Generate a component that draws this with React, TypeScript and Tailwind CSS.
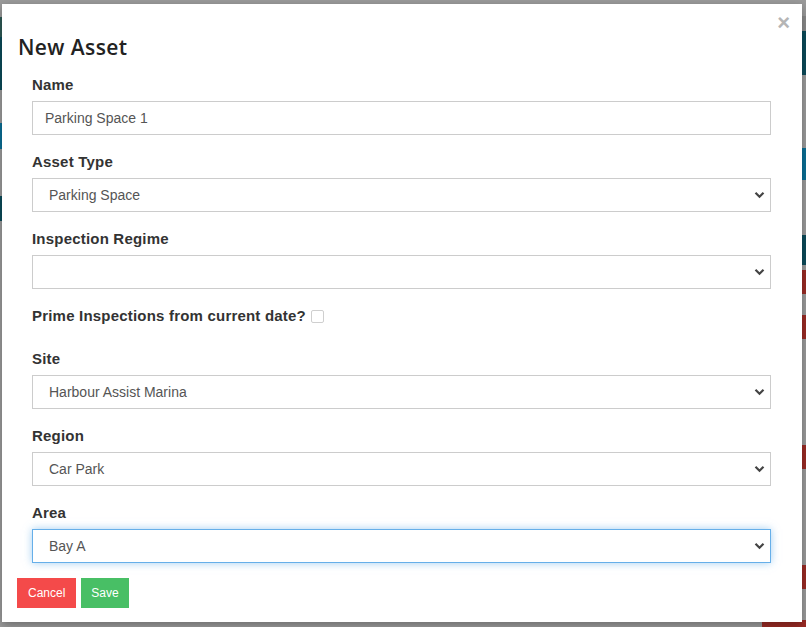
const Chevron = () => (
  <svg width="11" height="8" viewBox="0 0 11 8" className="shrink-0">
    <path d="M1.5 1.8 L5.5 5.8 L9.5 1.8" fill="none" stroke="#444" strokeWidth="2.2" />
  </svg>
);

const Label = ({ children }: { children: React.ReactNode }) => (
  <label className="block h-5 leading-5 text-[15px] tracking-[0.2px] font-bold text-[#333]">{children}</label>
);

const SelectBox = ({ value, focused }: { value: string; focused?: boolean }) => (
  <div
    className={
      focused
        ? "h-[34px] border border-[#66afe9] shadow-[0_0_8px_rgba(102,175,233,0.6)] bg-white pl-4 pr-[5px] flex items-center justify-between text-sm text-[#555]"
        : "h-[34px] border border-[#ccc] bg-white pl-4 pr-[5px] flex items-center justify-between text-sm text-[#555]"
    }
  >
    <span>{value}</span>
    <Chevron />
  </div>
);

const Group = ({ label, children }: { label: string; children: React.ReactNode }) => (
  <div className="mb-[17px]">
    <Label>{label}</Label>
    <div className="mt-[6px]">{children}</div>
  </div>
);

export default function App() {
  return (
    <div className="flex w-[806px] h-[627px] overflow-hidden bg-[#9b9b9b] font-['Liberation_Sans',Arial,sans-serif]">
      {/* dimmed page behind the modal, left edge */}
      <div className="w-[2px] flex flex-col">
        <div className="h-[17px]" />
        <div className="h-[20px] bg-[#2e5a55]" />
        <div className="h-[53px] bg-[#0b4b5a]" />
        <div className="h-[33px]" />
        <div className="h-[26px] bg-[#0a6f96]" />
        <div className="h-[47px]" />
        <div className="h-[25px] bg-[#0b4b5a]" />
      </div>

      {/* modal */}
      <div className="w-[800px] flex flex-col pt-[4px]">
        <div className="relative h-[618px] bg-white shadow-[0_3px_9px_rgba(0,0,0,0.3)]">
          <button className="absolute right-[12px] top-[8px] text-[22px] leading-none font-bold text-[#b5b5b5]">×</button>
          <h4 className="pl-4 pt-[30px] text-[21px] leading-[26px] font-semibold text-[#222] font-['Open_Sans',sans-serif] tracking-[0.4px]">
            New Asset
          </h4>
          <div className="pl-[30px] pr-[31px] mt-[15px]">
            <Group label="Name">
              <div className="h-[34px] border border-[#ccc] bg-white pl-3 flex items-center text-sm text-[#555]">
                Parking Space 1
              </div>
            </Group>
            <Group label="Asset Type">
              <SelectBox value="Parking Space" />
            </Group>
            <Group label="Inspection Regime">
              <SelectBox value="" />
            </Group>
            <div className="mb-[23px] flex items-center gap-[5px] h-5">
              <Label>Prime Inspections from current date?</Label>
              <span className="inline-block w-[13px] h-[13px] border border-[#cfcfcf] rounded-[2px] bg-white" />
            </div>
            <Group label="Site">
              <SelectBox value="Harbour Assist Marina" />
            </Group>
            <Group label="Region">
              <SelectBox value="Car Park" />
            </Group>
            <div>
              <Label>Area</Label>
              <div className="mt-[6px]">
                <SelectBox value="Bay A" focused />
              </div>
            </div>
          </div>
          <div className="pl-[15px] mt-[15px] flex gap-[5px]">
            <button className="h-[30px] px-[11px] bg-[#f44a4a] text-white text-xs">Cancel</button>
            <button className="h-[30px] px-[10px] bg-[#48bf65] text-white text-xs">Save</button>
          </div>
        </div>
        <div className="flex justify-end mt-[-2px]">
          <div className="w-[40px] h-[7px] bg-[#9a2a24]" />
        </div>
      </div>

      {/* dimmed page behind the modal, right edge */}
      <div className="w-[4px] flex flex-col">
        <div className="h-[16px]" />
        <div className="h-[15px] bg-[#8a8a8a]" />
        <div className="h-[44px] bg-[#0b4b5a]" />
        <div className="h-[73px]" />
        <div className="h-[32px] bg-[#0a6f96]" />
        <div className="h-[55px]" />
        <div className="h-[30px] bg-[#0b4b5a]" />
        <div className="h-[5px]" />
        <div className="h-[24px] bg-[#9a2a24]" />
        <div className="h-[21px]" />
        <div className="h-[24px] bg-[#9a2a24]" />
        <div className="h-[106px]" />
        <div className="h-[24px] bg-[#9a2a24]" />
        <div className="h-[96px]" />
        <div className="h-[24px] bg-[#9a2a24]" />
        <div className="h-[31px]" />
        <div className="h-[7px] bg-[#9a2a24]" />
      </div>
    </div>
  );
}
